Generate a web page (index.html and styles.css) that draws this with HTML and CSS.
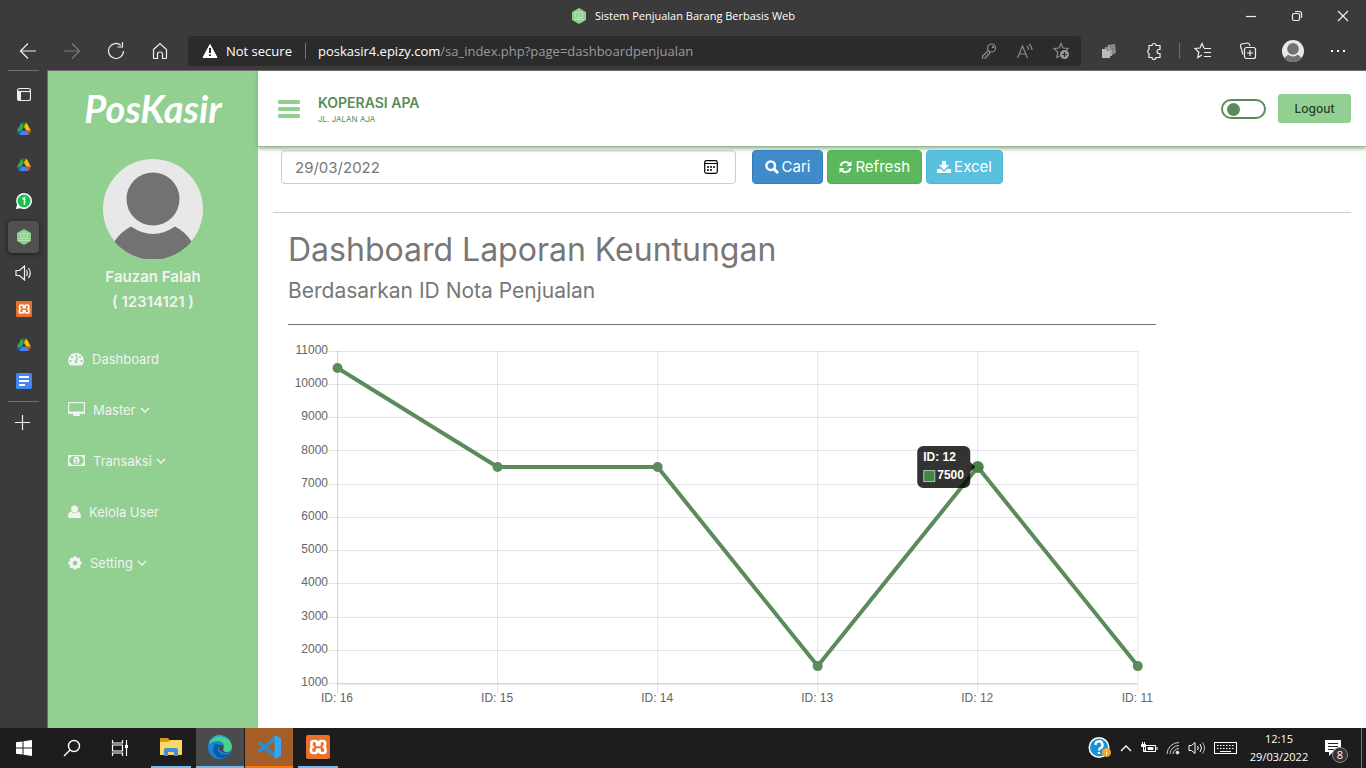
FILE: index.html
```html
<!DOCTYPE html>
<html lang="id">
<head>
<meta charset="utf-8">
<title>Sistem Penjualan Barang Berbasis Web</title>
<link rel="stylesheet" href="styles.css">
</head>
<body>
<svg class="defs" aria-hidden="true">
  <symbol id="hex" viewBox="0 0 16 16"><path fill="#8fd08f" d="M8 0l7 4v8l-7 4-7-4V4z"/><path fill="none" stroke="#b9e2b9" d="M4.500 4.500h7v5h-7zM3 11.500h10M7 6.500h2M7 8h1.500"/></symbol>
  <symbol id="drive" viewBox="0 0 16 16"><path fill="#34a853" d="M5.500 1.500L1 9.500l2.300 4 4.600-8z"/><path fill="#188038" d="M5.500 1.500h5l-2.600 4z"/><path fill="#fbbc04" d="M10.500 1.500L15 9.800h-4.700L7.900 5.500z"/><path fill="#4285f4" d="M5.700 9.800h4.600l2.400 4.200H3.300z"/><path fill="#ea4335" d="M10.300 9.800H15l-2.300 4.200z"/><path fill="#1967d2" d="M1 9.800h4.700L3.300 14z"/></symbol>
  <symbol id="xampp" viewBox="0 0 24 24"><rect width="24" height="24" rx="2" fill="#e8702a"/><path d="M7.500 6h2q1.500 0 1.500 1.500V10h2.500V7.500Q13.500 6 15 6h2q2 0 2 2v2q0 2-1.500 2 2 0 2 2.500V16q0 2-2 2h-2q-2 0-2-2v-1.500H11V16q0 2-2 2H7q-2 0-2-2v-1.500Q5 12 7 12q-1.500 0-1.500-2V8q0-2 2-2z" fill="none" stroke="#fff" stroke-width="2.600" stroke-linejoin="round"/></symbol>
  <symbol id="person" viewBox="0 0 100 100"><circle cx="50" cy="50" r="50" fill="#e8e8e8"/><circle cx="50" cy="40" r="26.500" fill="#727272"/><path fill="#727272" d="M28 67.500q22 15 44 0 10 5 16.500 15a50 50 0 0 1-77 0Q18 72.500 28 67.500z"/></symbol>
  <symbol id="chev" viewBox="0 0 10 6"><path d="M1 1l4 4 4-4" fill="none" stroke="currentColor" stroke-width="1.500"/></symbol>
</svg>

<header class="titlebar">
  <div class="title"><svg width="16" height="16"><use href="#hex"/></svg><span>Sistem Penjualan Barang Berbasis Web</span></div>
  <div class="winbtns">
    <button aria-label="Minimize"><svg width="12" height="12"><path d="M1 6.500h10"/></svg></button>
    <button aria-label="Restore"><svg width="12" height="12"><rect x="1.500" y="3.500" width="7" height="7" rx="1.500"/><path d="M4 1.500h4.500a2 2 0 0 1 2 2V8"/></svg></button>
    <button aria-label="Close"><svg width="12" height="12"><path d="M1 1l10 10M11 1L1 11"/></svg></button>
  </div>
</header>

<div class="toolbar">
  <nav class="navbtns">
    <button aria-label="Back"><svg width="18" height="18"><path d="M17 9H1.500M9 1.500L1.500 9 9 16.500"/></svg></button>
    <button class="dim" aria-label="Forward"><svg width="18" height="18"><path d="M1 9h15.500M9 1.500L16.500 9 9 16.500"/></svg></button>
    <button aria-label="Reload"><svg width="18" height="18"><path d="M16.500 9a7.500 7.500 0 1 1-2.700-5.800M15.500 0v5h-5"/></svg></button>
    <button aria-label="Home"><svg width="18" height="18"><path d="M2.500 7.500L9 1.500l6.500 6v8q0 1-1 1h-3V12q0-2-2.500-2t-2.500 2v4.500h-3q-1 0-1-1z"/></svg></button>
  </nav>
  <div class="address">
    <svg width="16" height="16"><path fill="#fff" stroke="#fff" stroke-linejoin="round" d="M8 1.500l7 13H1z"/><path stroke="#2b2b2b" stroke-width="2" d="M8 5v5M8 11.500v1.500"/></svg>
    <span class="secure">Not secure</span>
    <span class="url"><b>poskasir4.epizy.com</b>/sa_index.php?page=dashboardpenjualan</span>
    <button aria-label="Passwords"><svg width="16" height="16"><circle cx="10.500" cy="5" r="4"/><circle cx="12" cy="4" r=".6"/><path d="M7.500 7.500L1.500 13v2H5v-2h2v-2h1.500V9"/></svg></button>
    <button aria-label="Read aloud"><svg width="18" height="16"><path d="M1.500 15L6.500 3l5 12M3.300 11h6.500M11 3q1.500 1.500 1.500 4M13 1q3 2.500 3 6"/></svg></button>
    <button aria-label="Add to favorites"><svg width="18" height="18"><path d="M14 9l2-2.500-5-.5-2-4.500L7 6l-5 .5 3.800 3.700-1 5.300L8 13.800"/><circle cx="12.500" cy="12.500" r="4.500" fill="#999" stroke="none"/><path class="cut" d="M12.500 10v5M10 12.500h5"/></svg></button>
  </div>
  <div class="extras">
    <button aria-label="Documents"><svg width="16" height="16"><path fill="#8a8a8a" stroke="none" d="M6 2l8-1 1 9-4 2z"/><path fill="#a8a8a8" stroke="none" d="M4 4h7v9H4z"/><path fill="#bbb" stroke="none" d="M1 6h8v9H1z"/><path stroke="#777" d="M6 4v3h3M10 3v3h3"/></svg></button>
    <button aria-label="Extensions"><svg width="18" height="18"><path d="M4 3.500h3a2 2 0 0 1 4 0h4v4h-1a2 2 0 0 0 0 4h1v4h-4a2 2 0 0 1-4 0H4v-4a2.200 2.200 0 0 1 0-4z"/></svg></button>
    <i class="sep"></i>
    <button aria-label="Favorites"><svg width="18" height="18"><path d="M10 6L8 1.500 6 6l-5 .5 3.800 3.700-1 5.300L8 13M10 6.500h7M10 10.500h7M10 14.500h7"/></svg></button>
    <button aria-label="Collections"><svg width="18" height="18"><path d="M4 12.500L1.500 4q-.5-1.500 1-2l6-1q1.500 0 2 1.500l.5 1.500"/><rect x="5.500" y="5.500" width="11" height="11" rx="2"/><path d="M11 8v6M8 11h6"/></svg></button>
    <button aria-label="Profile"><svg width="22" height="22"><use href="#person"/></svg></button>
    <button aria-label="Menu"><svg width="16" height="4"><path fill="#fff" stroke="none" d="M1 1h2v2H1zM7 1h2v2H7zM13 1h2v2h-2z"/></svg></button>
  </div>
</div>

<div class="window">
  <nav class="tabs">
    <i class="rule"></i>
    <button aria-label="Tab actions"><svg width="14" height="18"><rect x=".5" y="4.500" width="13" height="12" rx="2"/><path d="M1 7.500h12.500"/><path fill="#eee" stroke="none" d="M1 8h3v9H1z"/></svg></button>
    <button aria-label="Drive"><svg width="16" height="16"><use href="#drive"/></svg></button>
    <button aria-label="Drive"><svg width="16" height="16"><use href="#drive"/></svg></button>
    <button aria-label="WhatsApp"><svg width="16" height="16"><path fill="#fff" stroke="none" d="M8 0a8 8 0 1 1-3.500 15.200L0 16l1-4.500A8 8 0 0 1 8 0z"/><circle cx="8" cy="8" r="6.500" fill="#12c24a" stroke="none"/><path stroke="#fff" stroke-width="1.600" d="M6.500 6l2-1.200V12"/></svg></button>
    <button class="current" aria-label="PosKasir"><svg width="16" height="16"><use href="#hex"/></svg></button>
    <button aria-label="Audio"><svg width="17" height="16"><path d="M1 5.500h3.500L9.500 1v14l-5-4.500H1zM11.500 5q1.500 3 0 6M13.500 3q3.500 5 0 10"/></svg></button>
    <button aria-label="XAMPP"><svg width="16" height="16"><use href="#xampp"/></svg></button>
    <button aria-label="Drive"><svg width="16" height="16"><use href="#drive"/></svg></button>
    <button aria-label="Docs"><svg width="16" height="16"><rect width="16" height="16" rx="1.500" fill="#4285f4" stroke="none"/><path stroke="#fff" stroke-width="2" d="M3 4h10M3 8h10M3 12h6"/></svg></button>
    <i class="rule"></i>
    <button aria-label="New tab"><svg width="18" height="16"><path d="M0 8.500h15M7.500 1v15"/></svg></button>
  </nav>

  <aside class="sidebar">
    <a class="brand" href="#">PosKasir</a>
    <svg class="avatar" width="100" height="100"><use href="#person"/></svg>
    <p class="user">Fauzan Falah<br>( 12314121 )</p>
    <ul class="menu">
      <li><a href="#"><svg width="16" height="14"><path fill="currentColor" d="M8 1a7.800 7.800 0 0 1 6.500 12q-.3.500-1 .5h-11q-.7 0-1-.5A7.800 7.800 0 0 1 8 1z"/><g fill="#91d090"><circle cx="8" cy="3.500" r="1"/><circle cx="4" cy="5" r="1"/><circle cx="2.600" cy="9" r="1"/><circle cx="13.400" cy="9" r="1"/><circle cx="12" cy="5" r="1"/><path d="M9 4.500l1 .3-1 4q1 2-1 2.400-2-.4-.7-2.700z"/></g></svg><span>Dashboard</span></a></li>
      <li><a href="#"><svg width="17" height="16"><path fill="currentColor" fill-rule="evenodd" d="M1 0h15q1 0 1 1v10q0 1-1 1h-5l.5 1H12v1H5v-1h.500l.5-1H1q-1 0-1-1V1q0-1 1-1zm.2 1.200v8.300h14.600V1.200z"/></svg><span>Master</span><svg class="caret" width="10" height="6"><use href="#chev"/></svg></a></li>
      <li><a href="#"><svg width="17" height="12"><path fill="currentColor" fill-rule="evenodd" d="M0 0h17v11H0zM3.500 1.200q0 2-2 2v4.600q2 0 2 2h10q0-2 2-2V3.200q-2 0-2-2z"/><ellipse cx="8.500" cy="5.500" rx="3" ry="3.700" fill="currentColor"/><path d="M7.500 4.500l1-.5v3.500M7 7.800h3" stroke="#91d090" fill="none"/></svg><span>Transaksi</span><svg class="caret" width="10" height="6"><use href="#chev"/></svg></a></li>
      <li><a href="#"><svg width="13" height="14"><circle cx="6.500" cy="4" r="3.500" fill="currentColor"/><path fill="currentColor" d="M3 6.500q3.500 3 7 0 3 1 3 5 0 1.500-1.500 1.500h-10Q0 13 0 11.500q0-4 3-5z"/></svg><span>Kelola User</span></a></li>
      <li><a href="#"><svg width="14" height="14"><circle cx="7" cy="7" r="4" fill="none" stroke="currentColor" stroke-width="3.500"/><path stroke="currentColor" stroke-width="2.600" d="M7 .3v2M7 11.700v2M.3 7h2M11.700 7h2M2.300 2.300l1.400 1.400M10.300 10.300l1.400 1.400M2.300 11.700l1.400-1.400M10.300 3.700l1.400-1.400"/></svg><span>Setting</span><svg class="caret" width="10" height="6"><use href="#chev"/></svg></a></li>
    </ul>
  </aside>

  <main class="page">
    <header class="topbar">
      <button class="burger" aria-label="Toggle menu"><i></i><i></i><i></i></button>
      <div class="shop"><strong>KOPERASI APA</strong><small>JL. JALAN AJA</small></div>
      <input class="switch" type="checkbox" aria-label="Mode gelap">
      <button class="logout">Logout</button>
    </header>

    <form class="filter">
      <div class="datebox">
        <input type="text" value="29/03/2022" aria-label="Tanggal">
        <button type="button" aria-label="Pilih tanggal"><svg width="14" height="14" fill="none" stroke="#000"><rect x=".7" y=".7" width="12.600" height="12.600" rx="1.800" stroke-width="1.200"/><path d="M1 3.500h12"/><path stroke-width="1.500" stroke-dasharray="2 1" d="M3 7h8M3 10h5"/></svg></button>
      </div>
      <button type="button" class="btn blue"><svg width="14" height="14"><circle cx="5.700" cy="5.700" r="4.300" fill="none" stroke="#fff" stroke-width="2.400"/><path d="M9 9l4 4" stroke="#fff" stroke-width="3"/></svg>Cari</button>
      <button type="button" class="btn green"><svg width="13" height="14"><path d="M1.500 6A5 5 0 0 1 10 3.500M11.500 8A5 5 0 0 1 3 10.500" fill="none" stroke="#fff" stroke-width="2"/><path fill="#fff" d="M12.500 1v5h-5zM.5 13V8h5z"/></svg>Refresh</button>
      <button type="button" class="btn sky"><svg width="14" height="14"><path fill="#fff" d="M5 1h4v4h3L7 10 2 5h3zM0 9h4l3 3 3-3h4v4H0z"/></svg>Excel</button>
    </form>

    <section class="report">
      <h1>Dashboard Laporan Keuntungan</h1>
      <h2>Berdasarkan ID Nota Penjualan</h2>
      <svg class="chart" viewBox="0 0 868 380" role="img" aria-label="Keuntungan per ID nota">
        <g stroke="#000" stroke-opacity=".11">
          <path d="M40 11.500h809M40 44.500h809M40 77.500h809M40 110.500h809M40 144.500h809M40 177.500h809M40 210.500h809M40 243.500h809M40 277.500h809M40 310.500h809M40 343.500h10"/>
          <path stroke-opacity=".22" d="M50 343.500h799"/>
          <path stroke-opacity=".17" d="M49.500 11v342"/>
          <path stroke-opacity=".1" d="M209.500 11v342M369.500 11v342M529.500 11v342M689.500 11v342M849.500 11v342"/>
        </g>
        <g class="ticks end">
          <text x="40" y="14">11000</text><text x="40" y="47">10000</text><text x="40" y="80">9000</text><text x="40" y="114">8000</text><text x="40" y="147">7000</text><text x="40" y="180">6000</text><text x="40" y="213">5000</text><text x="40" y="246">4000</text><text x="40" y="280">3000</text><text x="40" y="313">2000</text><text x="40" y="346">1000</text>
        </g>
        <g class="ticks mid">
          <text x="49" y="362">ID: 16</text><text x="209" y="362">ID: 15</text><text x="369" y="362">ID: 14</text><text x="529" y="362">ID: 13</text><text x="689" y="362">ID: 12</text><text x="849" y="362">ID: 11</text>
        </g>
        <polyline points="49.500,28 209.500,127 369.500,127 529.500,326 689.500,127 849.500,326" fill="none" stroke="#5b8a5b" stroke-width="4" stroke-linejoin="round"/>
        <g fill="#5b8a5b"><circle cx="49.500" cy="28" r="5"/><circle cx="209.500" cy="127" r="5"/><circle cx="369.500" cy="127" r="5"/><circle cx="529.500" cy="326" r="5"/><circle cx="849.500" cy="326" r="5"/></g>
        <circle cx="689.500" cy="127" r="6" fill="#468546"/>
        <path d="M635 106h41a6 6 0 0 1 6 6v10l5 5-5 5v10a6 6 0 0 1-6 6h-41a6 6 0 0 1-6-6v-30a6 6 0 0 1 6-6z" fill="#000" fill-opacity=".8"/>
        <rect x="635.500" y="130.500" width="11" height="11" fill="#468546" stroke="#a5c8a5"/>
        <g class="tip"><text x="635" y="121">ID: 12</text><text x="649" y="139">7500</text></g>
      </svg>
    </section>
  </main>
</div>

<footer class="taskbar">
  <button aria-label="Start"><svg width="16" height="16"><path fill="#fff" d="M0 2.300l6.500-.9v6.100H0zM7.500 1.200L16 0v7.500H7.500zM0 8.500h6.500v6.100L0 13.700zM7.500 8.500H16V16l-8.500-1.200z"/></svg></button>
  <button aria-label="Search"><svg width="18" height="18" fill="none" stroke="#fff" stroke-width="1.400"><circle cx="11" cy="7" r="5.500"/><path d="M7 11l-6 6"/></svg></button>
  <button aria-label="Task view"><svg width="18" height="18" fill="none" stroke="#fff" stroke-width="1.200"><path d="M1.500 1v3h10V1M1.500 17v-3h10v3M1.500 6v6h10V6zM15.500 1v16"/><path stroke-width="3" d="M15.500 6v3"/></svg></button>
  <div class="apps">
    <button class="open" aria-label="File Explorer"><svg width="22" height="20"><path fill="#d99a16" d="M0 2q0-1 1-1h7l2 3v5H0z"/><path fill="#fbd865" d="M0 5h8l2-2h12v14q0 1-1 1H0z"/><path fill="#3d8fd8" d="M4 19v-6q0-2 2-2h10q2 0 2 2v6h-4v-4H8v4z"/></svg></button>
    <button class="open wide active" aria-label="Edge"><svg width="24" height="24"><circle cx="12" cy="12" r="12" fill="#1586d4"/><path fill="#4bd18c" d="M1 9A12 12 0 0 1 24 11q0 6-6 6-4-1-2-4 1-6-6-7-5 0-9 3z"/><path fill="#29b5d8" d="M.5 9A12 12 0 0 1 15 .500Q4 2 .5 9z"/><path fill="#484848" d="M11 10q4-1 4.500 2-2 3 1 5 3 1 6-1-2 2-6 2-7-2-5.500-8z"/><path fill="#0b5aa6" d="M7 9q-3 4-1 9 3 6 10 5 4-1 6-5-6 3-10 0-4-3-1-8-2-2-4-1z"/></svg></button>
    <button class="open wide code" aria-label="Visual Studio Code"><svg width="24" height="24"><path fill="none" stroke="#2490dc" stroke-width="3.500" d="M18 21L2 7.500M18 3L2 16.500"/><path fill="#32a8f0" d="M17.500 0L24 3v18l-6.500 3z"/></svg></button>
    <button class="open" aria-label="XAMPP"><svg width="24" height="24"><use href="#xampp"/></svg></button>
  </div>
  <div class="tray">
    <svg width="24" height="22"><circle cx="11" cy="10.500" r="10.500" fill="#fff"/><circle cx="11" cy="10.500" r="9" fill="#1492d2"/><path d="M7.500 8a3.500 3.500 0 1 1 5 3q-1.500.8-1.500 2.500M11 15v2" fill="none" stroke="#fff" stroke-width="2.400"/><circle cx="18.500" cy="15.500" r="4.500" fill="#f5a81c"/><path stroke="#fff" d="M18.500 13v1M18.500 15v3"/></svg>
    <svg width="12" height="8"><path d="M1 7l5-5 5 5" fill="none" stroke="#fff" stroke-width="1.300"/></svg>
    <svg width="18" height="14" fill="none" stroke="#fff"><rect x="5.500" y="4.500" width="10" height="6"/><path fill="#fff" d="M8 6.500h5v2H8zM17 6v3M1.500 3.500h4v2h-4zM2.500 3V1M4.500 3V1M3.500 6v4.500H5"/></svg>
    <svg width="14" height="14" fill="none" stroke="#ccc"><path d="M1 13A12 12 0 0 1 13 1.500M4 13a9 9 0 0 1 9-8.500M7 13a6 6 0 0 1 6-5.500"/><circle cx="11.500" cy="11.500" r="1.500" fill="#fff"/></svg>
    <svg width="18" height="14" fill="none" stroke="#fff"><path d="M1 4.500h2.500L7 1.500v11l-3.500-3H1zM9.500 5q1.500 2 0 4M12 3q3 4 0 8"/><path stroke="#bbb" d="M14.500 1.500q4 5.500 0 11"/></svg>
    <svg width="24" height="14" fill="none" stroke="#fff"><rect x=".5" y="1.500" width="22" height="11"/><path stroke-dasharray="1.500 1.500" d="M3 4.500h18M3 7.500h18"/><path d="M6 10.500h11"/></svg>
    <div class="clock">12:15<br>29/03/2022</div>
    <div class="notes"><svg width="16" height="16"><path fill="#fff" d="M0 0h16v12H8l-4 4v-4H0z"/><path stroke="#222" d="M3 3.500h10M3 6.500h10M3 9.500h6"/></svg><span>8</span></div>
  </div>
</footer>
</body>
</html>
```
FILE: styles.css
```css
* { box-sizing: border-box; }
body {
  margin: 0;
  min-height: 100vh;
  display: flex;
  flex-direction: column;
  background: #3b3b3b;
  color: #fff;
  font: 11px/16px "Open Sans", "Noto Sans", sans-serif;
}
button { border: 0; padding: 0; background: none; color: inherit; font: inherit; cursor: pointer; }
svg { display: block; flex: none; }
.defs { position: absolute; width: 0; height: 0; }

/* browser frame */
.titlebar { display: grid; grid-template-columns: 1fr auto 1fr; height: 32px; align-items: center; }
.title { grid-column: 2; display: flex; gap: 8px; align-items: center; }
.winbtns { display: flex; justify-content: flex-end; }
.winbtns button { width: 46px; height: 32px; display: grid; place-items: center; }
.winbtns svg, .toolbar button svg, .tabs svg { fill: none; stroke: #f0f0f0; stroke-width: 1.2; }
svg use { stroke: none; }
.toolbar { display: flex; align-items: center; height: 38px; padding: 0 6px; }
.toolbar button { width: 44px; height: 30px; display: grid; place-items: center; }
.navbtns { display: flex; }
.toolbar .navbtns .dim svg { stroke: #7c7c7c; }
.address {
  flex: 1;
  display: flex;
  align-items: center;
  height: 30px;
  margin: 0 6px;
  padding: 0 2px 0 14px;
  border-radius: 4px;
  background: #2b2b2b;
  font-size: 13px;
}
.address .secure { margin: 0 13px 0 8px; }
.address .url { flex: 1; padding-left: 12px; border-left: 1px solid #777; color: #9b9b9b; white-space: nowrap; }
.address .url b { font-weight: 400; color: #fff; }
.address button { width: 36px; }
.toolbar .address button svg { stroke: #8c8c8c; }
.address .cut { stroke: #2b2b2b; }
.extras { display: flex; align-items: center; gap: 1px; }
.sep { width: 3px; height: 16px; border-right: 1px solid #6c6c6c; }

.window { flex: 1; display: flex; }
.tabs { width: 47px; display: flex; flex-direction: column; align-items: center; gap: 4px; }
.tabs .rule { width: 31px; height: 1px; background: #707070; }
.tabs .rule:first-child { margin-bottom: 2px; }
.tabs button { width: 31px; height: 32px; display: grid; place-items: center; border-radius: 4px; }
.tabs .current { background: #505050; box-shadow: 0 1px 4px #1c1c1c; }

/* app sidebar */
.sidebar {
  width: 211px;
  border-left: 1px solid #6b6b6b;
  border-top: 1px solid #6b6b6b;
  background: #91d090;
  display: flex;
  flex-direction: column;
  align-items: center;
  color: #f2f2f2;
  font-family: Inter, "Open Sans", sans-serif;
}
.brand { margin: 16px 0 30px; color: #fff; font: italic 700 38px/42px Lato, sans-serif; text-decoration: none; }
.user { margin: 5px 0 19px; font-size: 15px; line-height: 25px; font-weight: 600; text-align: center; }
.menu { align-self: stretch; margin: 0; padding: 0 0 0 20px; list-style: none; }
.menu a { display: flex; align-items: center; gap: 8px; height: 51px; color: inherit; text-decoration: none; font-size: 13px; }
.menu .caret { margin-left: -4px; }

/* app page */
.page { flex: 1; min-width: 0; border-top: 1px solid #6b6b6b; background: #fff; color: #777; font-family: Inter, "Open Sans", sans-serif; }
.topbar {
  display: flex;
  align-items: center;
  height: 76px;
  padding: 0 15px 0 20px;
  border-bottom: 1px solid #94b894;
  box-shadow: 0 2px 4px #5b8a5b99;
}
.burger { display: grid; gap: 3px; width: 22px; }
.burger i { height: 4px; border-radius: 1px; background: #8fd08f; }
.shop { flex: 1; display: grid; margin-left: 18px; color: #5b8a5b; }
.shop strong { font-size: 14px; line-height: 20px; font-weight: 600; }
.shop small { font-size: 8px; line-height: 12px; }
.switch {
  appearance: none;
  width: 45px;
  height: 20px;
  margin: 0 12px 0 0;
  padding: 2px 4px;
  border: 2px solid #5b8a5b;
  border-radius: 10px;
}
.switch::before { content: ""; display: block; width: 13px; height: 13px; border-radius: 50%; background: #5b8a5b; }
.logout { height: 29px; min-width: 73px; padding: 0 15px; border-radius: 3px; background: #91d090; color: #2d3b2d; font-size: 12px; font-weight: 500; }

.filter { display: flex; gap: 4px; margin: 0 15px; padding: 3px 8px 28px; border-bottom: 1px solid #ccc; }
.datebox {
  display: flex;
  align-items: center;
  width: 42.8%;
  height: 34px;
  margin-right: 12px;
  padding: 0 17px 0 13px;
  border: 1px solid #ccc;
  border-radius: 4px;
  box-shadow: inset 0 1px 1px #0001;
}
.datebox input { flex: 1; min-width: 0; border: 0; outline: 0; padding: 0; background: none; color: #777; font: 15px Inter, sans-serif; }
.btn { display: flex; align-items: center; gap: 3px; height: 34px; padding: 0 11px; border: 1px solid; border-radius: 4px; color: #fff; font-size: 15px; }
.blue { padding: 0 12px; background: #428bca; border-color: #357ebd; }
.green { background: #5cb85c; border-color: #4cae4c; }
.sky { padding: 0 10px; background: #5bc0de; border-color: #46b8da; }

.report { width: calc((100% - 30px) * 5 / 6 - 30px); margin-left: 30px; padding-top: 17px; }
.report h1 { margin: 0 0 10px; font-size: 32px; line-height: 40px; font-weight: 400; }
.report h2 { margin: 0 0 15px; padding-bottom: 22px; border-bottom: 1px solid #727272; font-size: 21px; line-height: 22px; font-weight: 400; }
.chart { width: 100%; height: auto; font-family: "Liberation Sans", Arial, sans-serif; font-size: 12px; }
.ticks { fill: #666; }
.end { text-anchor: end; }
.mid { text-anchor: middle; }
.tip { fill: #fff; font-weight: 700; }

/* desktop taskbar */
.taskbar { display: flex; height: 40px; background: #1d1d1e; }
.taskbar button { width: 48px; display: grid; place-items: center; }
.apps { display: flex; gap: 1px; padding-left: 7px; }
.apps .open { width: 40px; border-bottom: 2px solid #76b9ed; }
.apps .wide { width: 48px; }
.apps .active { margin-left: 4px; background: #4b4b4c; }
.apps .code { background: #a65e28; border-color: #f70; margin-right: 4px; }
.tray { flex: 1; display: flex; align-items: center; justify-content: flex-end; gap: 8px; padding-right: 4px; }
.clock { width: 66px; text-align: center; line-height: 18px; font-size: 11px; }
.notes { display: flex; align-items: center; height: 40px; width: 42px; padding-left: 5px; border-right: 1px solid #777; }
.notes span { width: 16px; height: 16px; margin: 14px 0 0 -9px; border-radius: 50%; border: 1px solid #888; background: #333; line-height: 14px; text-align: center; }
```
